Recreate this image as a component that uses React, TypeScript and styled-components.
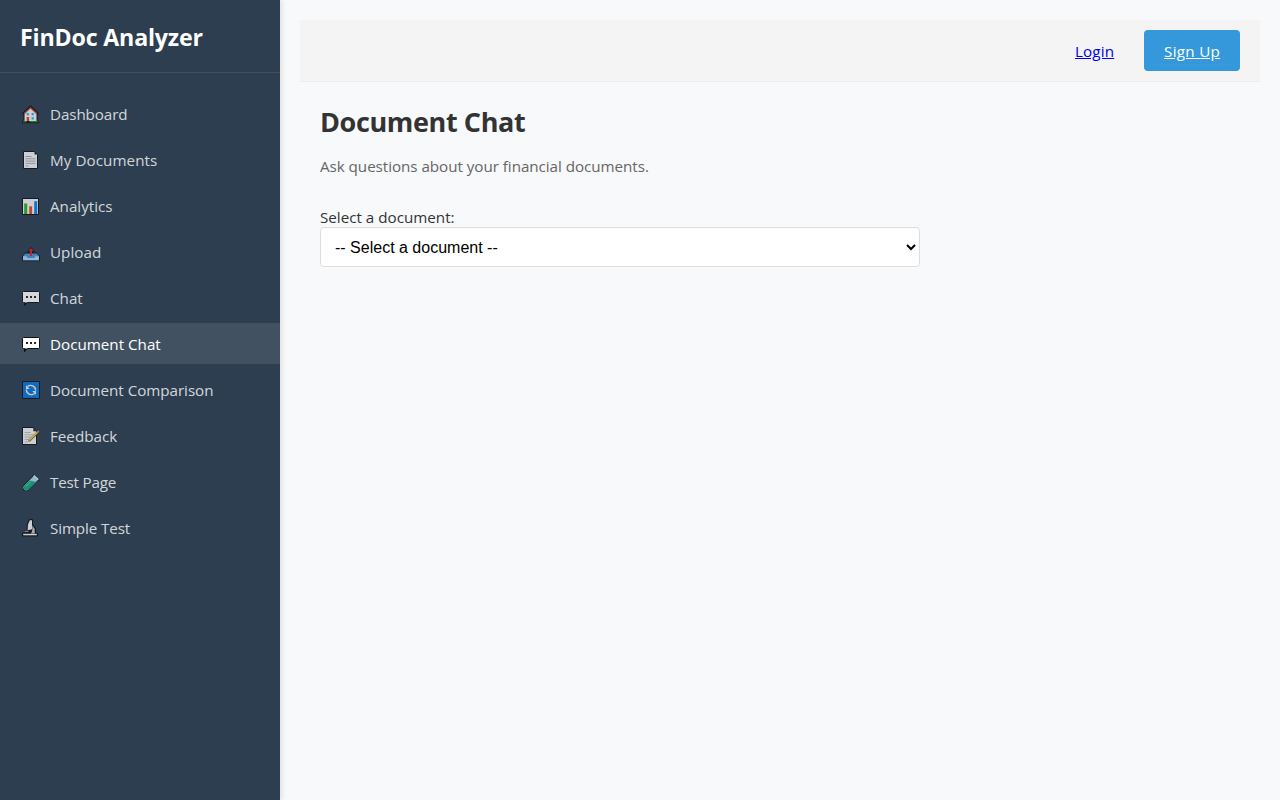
import React from "react";
import styled, { createGlobalStyle } from "styled-components";

const GlobalStyle = createGlobalStyle`
  * { box-sizing: border-box; }
  body {
    margin: 0;
    background: #f8f9fb;
    color: #333;
    font-family: "Open Sans", "Noto Sans", sans-serif;
    font-size: 15.2px;
    line-height: 21px;
  }
`;

const Layout = styled.div`
  display: flex;
  min-height: 100vh;
`;

const Sidebar = styled.aside`
  width: 280px;
  flex-shrink: 0;
  background: #2c3e50;
  color: #fff;
  box-shadow: 2px 0 5px rgba(0, 0, 0, 0.1);
`;

const Brand = styled.div`
  height: 73px;
  padding: 21px 20px 0;
  border-bottom: 1px solid rgba(255, 255, 255, 0.1);
  font-size: 23.2px;
  font-weight: 700;
  line-height: 32px;
`;

const Fit = styled.span<{ $track?: number }>`
  letter-spacing: ${(p) => p.$track ?? 0}px;
  white-space: nowrap;
`;

const Menu = styled.nav`
  display: flex;
  flex-direction: column;
  gap: 5px;
  padding-top: 20px;
`;

const MenuItem = styled.a<{ $active?: boolean }>`
  display: flex;
  align-items: flex-start;
  gap: 10px;
  height: 41px;
  padding: 11px 20px 0 22px;
  color: ${(p) => (p.$active ? "#fff" : "rgba(255, 255, 255, 0.8)")};
  background: ${(p) => (p.$active ? "rgba(255, 255, 255, 0.1)" : "transparent")};
`;

const Glyph = styled.svg<{ $active?: boolean }>`
  width: 18px;
  height: 18px;
  margin-top: 2px;
  overflow: visible;
  opacity: ${(p) => (p.$active ? 1 : 0.8)};
`;

const Main = styled.main`
  flex: 1;
  padding: 20px;
`;

const TopBar = styled.header`
  display: flex;
  align-items: flex-start;
  justify-content: flex-end;
  gap: 30px;
  height: 62px;
  padding: 10px 20px;
  background: #f4f4f4;
  border-bottom: 1px solid #eee;
`;

const LoginLink = styled.a`
  width: 39px;
  padding-top: 11px;
  color: #0000ee;
  text-decoration: underline;
`;

const SignUpLink = styled.a`
  width: 96px;
  height: 41px;
  padding: 11px 0 9px 20px;
  border-radius: 4px;
  background: #3498db;
  color: #fff;
  text-decoration: underline;
`;

const Content = styled.section`
  padding: 20px;
`;

const Title = styled.h1`
  margin: 0;
  font-size: 27px;
  font-weight: 700;
  line-height: 39px;
`;

const Lead = styled.p`
  margin: 15px 0 0;
  color: #666;
`;

const Field = styled.div`
  display: flex;
  flex-direction: column;
  width: 600px;
  margin-top: 30px;
`;

const Label = styled.label`
  height: 20px;
`;

const Select = styled.select`
  height: 40px;
  padding: 10px;
  border: 1px solid #ddd;
  border-radius: 4px;
  background: #fff;
  color: #000;
  font-family: "Liberation Sans", Arial, sans-serif;
  font-size: 16px;
`;

const house = (
  <>
    <path d="M2 8v8.5h13V8L8.5 1z" fill="#f4f4f4" stroke="#111" />
    <path d="M.8 8L8.5.8 16.2 8" fill="none" stroke="#111" strokeWidth="2.2" />
    <path d="M2 7.8L8.5 1.8 15 7.8" fill="none" stroke="#d8432f" strokeWidth="1.2" />
    <path d="M4.7 7h2.2v2.2H4.7zM9.6 7h2.2v2.2H9.6zM9.6 11.3h2.2v2.2H9.6z" fill="#27b4ec" />
    <path d="M4.7 11h2.4v5H4.7z" fill="#e23b27" />
    <path d="M0 15h17v2.2H0z" fill="#111" />
    <path d="M1 15.3h3.7v1H1zM7.5 15.3H16v1H7.5z" fill="#2db52d" />
  </>
);

const page = (
  <>
    <path d="M1.5-.5h11l3 3v14h-14z" fill="#f4f4f4" stroke="#111" />
    <path d="M12.5-.5v3h3z" fill="#222" />
    <path d="M3.5 4.5h6M3.5 6.8h10M3.5 9.1h10M3.5 11.4h10M3.5 13.9h3" stroke="#aaa" />
  </>
);

const chart = (
  <>
    <path d="M.5.5h16v16H.5z" fill="#f4f4f4" stroke="#111" />
    <path d="M2.2 5.5h3V16h-3z" fill="#21b421" />
    <path d="M7.2 8.3h2.9V16H7.2z" fill="#e44a2c" />
    <path d="M12.2 3.2h3V16h-3z" fill="#1482dc" />
  </>
);

const upload = (
  <>
    <path d="M3.2 9h11.6l2.7 3v4.7H.5V12z" fill="#4796d8" stroke="#111" />
    <path d="M1 12.3h3.5L5.7 14h6.6l1.2-1.7H17v4H1z" fill="#a7d6fb" />
    <path d="M7.5 9V8H5L9 3l4 5h-2.5v1z" fill="#111" />
    <path d="M8 12V7H6.3L9 4.1 11.7 7H10v5z" fill="#ee1530" />
  </>
);

const speech = (
  <>
    <path d="M1.5 1.5h15l1 1v9l-1 1h-11l-3 3.2v-3.2h-1l-1-1v-9z" fill="#fff" stroke="#111" />
    <path d="M2.5 12.5h3l-3 3.2z" fill="#111" />
    <path d="M4 6h2v2H4zM8 6h2v2H8zM12 6h2v2h-2z" fill="#222" />
  </>
);

const refresh = (
  <>
    <path d="M.5-.5h17v17H.5z" fill="#0878d7" stroke="#111" />
    <path d="M5.4 4.6A5 5 0 0 1 13.6 8.6M12.6 11.4A5 5 0 0 1 4.4 7.4" fill="none" stroke="#eee" strokeWidth="1.3" />
    <path d="M4 3.2V7h3.8zM14 12.8V9h-3.8z" fill="#eee" />
  </>
);

const memo = (
  <>
    <path d="M.5-.5h10.8l3.2 3.7v13.3H.5z" fill="#f4f4f4" stroke="#111" />
    <path d="M11.3-.5v3.7h3.2z" fill="#222" />
    <path d="M2.5 4.5h6M2.5 6.8h9M2.5 9.1h7M2.5 11.4h5M2.5 13.9h3" stroke="#bbb" />
    <path d="M7 12.8L16.8 3.3" stroke="#333" strokeWidth="2.3" />
    <path d="M7 12.5L15.6 4.2" stroke="#f5c437" strokeWidth="1.8" />
    <path d="M15.3 4.5L16.9 2.9" stroke="#ee6b5b" strokeWidth="1.8" />
    <path d="M5.5 14l.7-2 1.4 1.3z" fill="#999" />
  </>
);

const tube = (
  <>
    <path d="M11.5.7l5.8 5.1-1.4.8-9.4 9.3a3.2 3.2 0 0 1-4.8-4.6L11 2.2z" fill="#a9d4f4" stroke="#111" />
    <path d="M7.5 6.5l6.8 1.4L6.2 15.4a2.6 2.6 0 0 1-4-3.7z" fill="#13a87d" />
    <path d="M11.8 1.5l4.5 4" stroke="#ddecf8" strokeWidth="1.3" />
    <path d="M4 12.7l5-5" stroke="#35c99f" strokeWidth="1.1" />
  </>
);

const microscope = (
  <>
    <path d="M.5 16v-2.8h4V12h-2v-1.5h2.7v-6L7.2-.3h3.3v4.5l3 4.3v4.7h2V16z" fill="#111" stroke="#111" />
    <path d="M1.2 13.8h13.6v1.5H1.2z" fill="#f4f4f4" />
    <path d="M6 4.5L7.8.2h2.2v9L5.6 10.3z" fill="#f4f4f4" />
    <path d="M10.3 5.2l2.4 3.8v4.5H8.2c2-.9 2.4-2.7 2.1-8.3z" fill="#ccc" />
    <path d="M2.5 11.3h4" stroke="#bbb" />
  </>
);

const items = [
  { label: "Dashboard", icon: house, track: -0.1 },
  { label: "My Documents", icon: page, track: 0.07 },
  { label: "Analytics", icon: chart, track: 0 },
  { label: "Upload", icon: upload, track: 0.03 },
  { label: "Chat", icon: speech, track: 0 },
  { label: "Document Chat", icon: speech, track: 0, active: true },
  { label: "Document Comparison", icon: refresh, track: -0.04 },
  { label: "Feedback", icon: memo, track: 0 },
  { label: "Test Page", icon: tube, track: -0.2 },
  { label: "Simple Test", icon: microscope, track: -0.12 },
];

export default function App() {
  return (
    <>
      <GlobalStyle />
      <Layout>
        <Sidebar>
          <Brand>
            <Fit $track={-0.18}>FinDoc Analyzer</Fit>
          </Brand>
          <Menu>
            {items.map((item) => (
              <MenuItem key={item.label} $active={item.active}>
                <Glyph viewBox="0 0 18 18" $active={item.active} aria-hidden="true">
                  {item.icon}
                </Glyph>
                <Fit $track={item.track}>{item.label}</Fit>
              </MenuItem>
            ))}
          </Menu>
        </Sidebar>
        <Main>
          <TopBar>
            <LoginLink href="#login">
              <Fit $track={0.15}>Login</Fit>
            </LoginLink>
            <SignUpLink href="#signup">
              <Fit $track={0.3}>Sign Up</Fit>
            </SignUpLink>
          </TopBar>
          <Content>
            <Title>
              <Fit $track={-0.38}>Document Chat</Fit>
            </Title>
            <Lead>
              <Fit $track={-0.04}>Ask questions about your financial documents.</Fit>
            </Lead>
            <Field>
              <Label htmlFor="document">
                <Fit $track={0}>Select a document:</Fit>
              </Label>
              <Select id="document" defaultValue="">
                <option value="">-- Select a document --</option>
              </Select>
            </Field>
          </Content>
        </Main>
      </Layout>
    </>
  );
}
